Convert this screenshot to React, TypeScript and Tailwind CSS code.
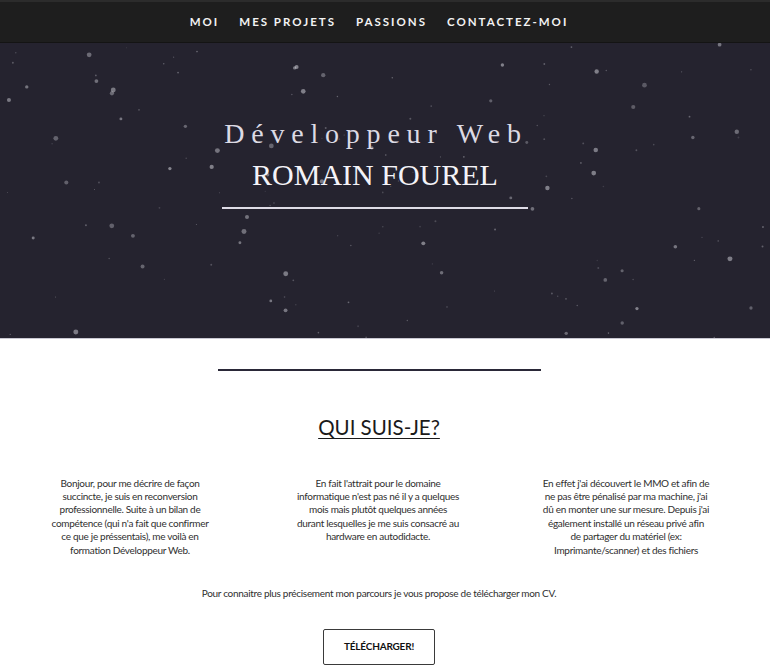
import React from 'react'

const links = ['MOI', 'MES PROJETS', 'PASSIONS', 'CONTACTEZ-MOI']

// petite graine pour avoir toujours le même ciel
const makeStars = () => {
  let seed = 11
  const rnd = () => {
    seed = (seed * 16807) % 2147483647
    return (seed - 1) / 2147483646
  }
  const stars = []
  for (let i = 0; i < 150; i++) {
    const big = rnd() > 0.65
    stars.push({
      x: rnd() * 770,
      y: rnd() * 296,
      r: big ? 1.4 + rnd() * 1.1 : 0.5 + rnd() * 0.5,
      o: big ? 0.3 + rnd() * 0.25 : 0.15 + rnd() * 0.25,
    })
  }
  return stars
}

const stars = makeStars()

const Stars = () => (
  <svg className="absolute inset-0 w-full h-full" viewBox="0 0 770 296" preserveAspectRatio="none">
    {stars.map((s, i) => (
      <circle key={i} cx={s.x} cy={s.y} r={s.r} fill="#d6d6de" opacity={s.o} />
    ))}
  </svg>
)

const App = () => {
  return (
    <div className="w-[770px] h-[666px] overflow-hidden bg-white" style={{ fontFamily: 'Lato, "Open Sans", sans-serif' }}>
      <nav className="h-[43px] bg-[#1e1e1e] border-t-2 border-[#2c2c2c] border-b border-b-[#141414] flex items-center justify-center gap-[20px] pr-[12px]">
        {links.map((l) => (
          <a key={l} className="text-[11.5px] font-bold tracking-[2px] text-[#f2f2f2] leading-none">{l}</a>
        ))}
      </nav>

      <header className="relative h-[296px] bg-[#25232f] border-b border-[#c9c8d2] flex flex-col items-center pr-[20px]">
        <Stars />
        <div className="relative mt-[77px] flex flex-col items-center" style={{ fontFamily: '"Liberation Serif", serif' }}>
          <h2 className="text-[28px] leading-none tracking-[6.8px] text-[#dcdae4] pl-[2px]">Développeur Web</h2>
          <h1 className="mt-[12px] text-[30px] leading-none text-[#f4f3f8]">ROMAIN FOUREL</h1>
          <div className="mt-[17px] w-[306px] h-[2px] bg-[#dedce6]" />
        </div>
      </header>

      <section className="flex flex-col items-center text-[#2f2f2f] pr-[12px]">
        <div className="mt-[30px] w-[323px] h-[2px] bg-[#2a2838]" />
        <h3 className="mt-[46px] text-[20.5px] leading-none underline underline-offset-[3px] decoration-1 text-[#1a1a1a]">QUI SUIS-JE?</h3>

        <div className="mt-[39px] self-start ml-[6px] w-[744px] grid grid-cols-3 text-[10px] tracking-[-0.3px] leading-[13.4px] text-center">
          <p className="justify-self-center w-[160px]">
            Bonjour, pour me décrire de façon succincte, je suis en reconversion professionnelle. Suite à un bilan de compétence (qui n'a fait que confirmer ce que je préssentais), me voilà en formation Développeur Web.
          </p>
          <p className="justify-self-center w-[166px]">
            En fait l'attrait pour le domaine informatique n'est pas né il y a quelques mois mais plutôt quelques années durant lesquelles je me suis consacré au hardware en autodidacte.
          </p>
          <p className="justify-self-center w-[172px]">
            En effet j'ai découvert le MMO et afin de ne pas être pénalisé par ma machine, j'ai dû en monter une sur mesure. Depuis j'ai également installé un réseau privé afin<br />de partager du matériel (ex: Imprimante/scanner) et des fichiers
          </p>
        </div>

        <p className="mt-[31px] text-[10px] tracking-[-0.3px] leading-none">
          Pour connaitre plus précisement mon parcours je vous propose de télécharger mon CV.
        </p>

        <button className="mt-[31px] w-[112px] h-[36px] border border-[#3a3a3a] rounded-[2px] text-[10px] font-bold tracking-[-0.2px] text-[#111]">
          TÉLÉCHARGER!
        </button>
      </section>
    </div>
  )
}

export default App
